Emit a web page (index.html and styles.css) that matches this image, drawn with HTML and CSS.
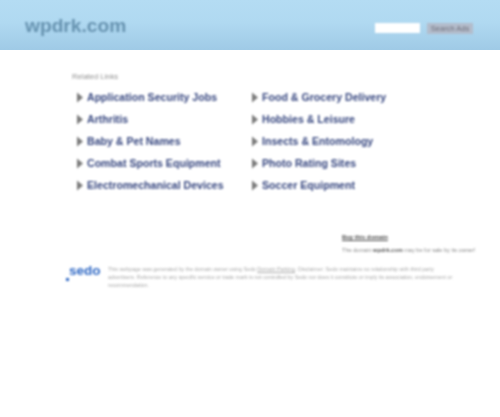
FILE: index.html
```html
<!DOCTYPE html>
<html lang="en">
<head>
<meta charset="utf-8">
<title>wpdrk.com</title>
<link rel="stylesheet" href="styles.css">
</head>
<body>
<div class="page">
  <header class="top">
    <h1 class="domain">wpdrk.com</h1>
    <form class="search">
      <span class="search-input"></span>
      <span class="search-btn">Search Ads</span>
    </form>
  </header>
  <main class="main">
    <h2 class="related">Related Links</h2>
    <ul class="links">
      <li><svg class="arrow" viewBox="0 0 6 10"><path d="M0 0L6 5L0 10Z"/></svg><a>Application Security Jobs</a></li>
      <li><svg class="arrow" viewBox="0 0 6 10"><path d="M0 0L6 5L0 10Z"/></svg><a>Food &amp; Grocery Delivery</a></li>
      <li><svg class="arrow" viewBox="0 0 6 10"><path d="M0 0L6 5L0 10Z"/></svg><a>Arthritis</a></li>
      <li><svg class="arrow" viewBox="0 0 6 10"><path d="M0 0L6 5L0 10Z"/></svg><a>Hobbies &amp; Leisure</a></li>
      <li><svg class="arrow" viewBox="0 0 6 10"><path d="M0 0L6 5L0 10Z"/></svg><a>Baby &amp; Pet Names</a></li>
      <li><svg class="arrow" viewBox="0 0 6 10"><path d="M0 0L6 5L0 10Z"/></svg><a>Insects &amp; Entomology</a></li>
      <li><svg class="arrow" viewBox="0 0 6 10"><path d="M0 0L6 5L0 10Z"/></svg><a>Combat Sports Equipment</a></li>
      <li><svg class="arrow" viewBox="0 0 6 10"><path d="M0 0L6 5L0 10Z"/></svg><a>Photo Rating Sites</a></li>
      <li><svg class="arrow" viewBox="0 0 6 10"><path d="M0 0L6 5L0 10Z"/></svg><a>Electromechanical Devices</a></li>
      <li><svg class="arrow" viewBox="0 0 6 10"><path d="M0 0L6 5L0 10Z"/></svg><a>Soccer Equipment</a></li>
    </ul>
    <section class="buy">
      <h3 class="buy-title">Buy this domain</h3>
      <p class="buy-text">The domain <b>wpdrk.com</b> may be for sale by its owner!</p>
    </section>
    <footer class="foot">
      <div class="sedo"><span class="dot"></span><span class="sedo-word">sedo</span></div>
      <div class="legal">
        <p class="legal-line">This webpage was generated by the domain owner using Sedo <u>Domain Parking</u>. Disclaimer: Sedo maintains no relationship with third party</p>
        <p class="legal-line">advertisers. Reference to any specific service or trade mark is not controlled by Sedo nor does it constitute or imply its association, endorsement or</p>
        <p class="legal-line">recommendation.</p>
      </div>
    </footer>
  </main>
</div>
</body>
</html>
```
FILE: styles.css
```css
html, body {
  margin: 0;
  padding: 0;
  background: #fff;
}
body {
  font-family: "Liberation Sans", Arial, sans-serif;
}
.page {
  width: 500px;
  height: 417px;
  overflow: hidden;
}
.top {
  height: 50px;
  box-sizing: border-box;
  padding: 0 0 0 25px;
  display: flex;
  justify-content: space-between;
  background: linear-gradient(#b4dcf3 0%, #b0d9f1 45%, #9fcae6 100%);
}
.domain {
  margin: 14px 0 0;
  font-size: 19.2px;
  line-height: 24px;
  font-weight: bold;
  color: #6793b0;
  filter: blur(0.8px);
}
.search {
  display: flex;
  align-items: center;
  gap: 7px;
  margin: 22px 0 0;
  padding-right: 27px;
  height: 12px;
  filter: blur(0.8px);
}
.search-input {
  width: 45px;
  height: 10px;
  background: #fff;
}
.search-btn {
  width: 46px;
  height: 11px;
  background: #b3bccb;
  color: #6d6d78;
  font-size: 7.5px;
  line-height: 11px;
  text-align: center;
}
.main {
  padding: 23px 0 0 72px;
  filter: blur(0.8px);
}
.related {
  margin: 0;
  font-size: 7.6px;
  line-height: 8px;
  font-weight: normal;
  color: #909090;
}
.links {
  list-style: none;
  margin: 5px 0 0 5px;
  padding: 0;
  display: grid;
  grid-template-columns: 175px 175px;
  grid-auto-rows: 22px;
}
.links li {
  display: flex;
  align-items: center;
  gap: 5px;
  white-space: nowrap;
}
.arrow {
  width: 6px;
  height: 11px;
  margin-right: -1px;
  fill: #7a7a7a;
  flex: none;
}
.links a {
  font-size: 10.6px;
  font-weight: bold;
  color: #36467f;
}
.buy {
  margin: 37px 0 0 270px;
}
.buy-title {
  margin: 0;
  font-size: 5.9px;
  line-height: 8px;
  font-weight: bold;
  color: #444;
  text-decoration: underline;
}
.buy-text {
  margin: 5px 0 0;
  font-size: 5.6px;
  line-height: 8px;
  color: #888;
  white-space: nowrap;
}
.buy-text b {
  color: #555;
}
.foot {
  display: flex;
  margin: 7px 0 0 -6px;
  gap: 6px;
}
.sedo {
  position: relative;
  width: 36px;
  height: 20px;
  flex: none;
}
.sedo-word {
  display: block;
  padding: 1px 0 0 3px;
  font-size: 13.5px;
  line-height: 18px;
  font-weight: bold;
  color: #2f68c4;
}
.dot {
  position: absolute;
  left: 0;
  bottom: 0;
  width: 3px;
  height: 3px;
  background: #2f68c4;
}
.legal {
  margin: 4px 0 0;
  font-size: 5.3px;
  line-height: 8px;
  color: #a8a8a8;
}
.legal-line {
  margin: 0;
  white-space: nowrap;
}
```
